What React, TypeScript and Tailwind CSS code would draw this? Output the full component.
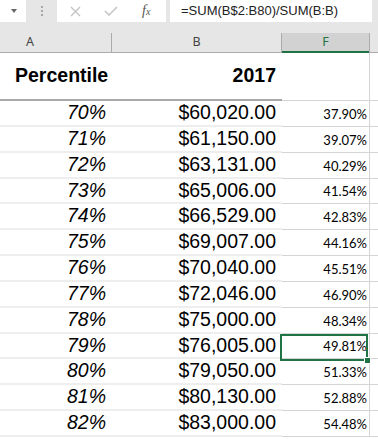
import React from "react";

const rows = [
  { p: "70%", v: "$60,020.00", f: "37.90%", h: "h-[26px]" },
  { p: "71%", v: "$61,150.00", f: "39.07%", h: "h-[26px]" },
  { p: "72%", v: "$63,131.00", f: "40.29%", h: "h-[26px]" },
  { p: "73%", v: "$65,006.00", f: "41.54%", h: "h-[25px]" },
  { p: "74%", v: "$66,529.00", f: "42.83%", h: "h-[26px]" },
  { p: "75%", v: "$69,007.00", f: "44.16%", h: "h-[26px]" },
  { p: "76%", v: "$70,040.00", f: "45.51%", h: "h-[26px]" },
  { p: "77%", v: "$72,046.00", f: "46.90%", h: "h-[26px]" },
  { p: "78%", v: "$75,000.00", f: "48.34%", h: "h-[26px]" },
  { p: "79%", v: "$76,005.00", f: "49.81%", h: "h-[25px]", selected: true },
  { p: "80%", v: "$79,050.00", f: "51.33%", h: "h-[26px]" },
  { p: "81%", v: "$80,130.00", f: "52.88%", h: "h-[26px]" },
  { p: "82%", v: "$83,000.00", f: "54.48%", h: "h-[26px]" },
];

export default function App() {
  return (
    <div className="h-[439px] w-[378px] overflow-hidden bg-white font-['Liberation_Sans',sans-serif] text-black">
      <FormulaBar />
      <div className="h-[11px] bg-[#e6e6e6]" />
      <ColumnHeaders />

      <div className="flex h-[48px]">
        <div className="flex w-[112px] items-center border-b-2 border-[#a9a9a9] pl-[15px] text-[19.5px] font-bold">
          Percentile
        </div>
        <div className="flex w-[170px] items-center justify-end border-b-2 border-[#a9a9a9] pr-[6px] text-[19.5px] font-bold">
          2017
        </div>
        <div className="w-[88px] border-r border-b border-[#d4d4d4]" />
        <div className="flex-1 border-b border-[#d4d4d4]" />
      </div>

      {rows.map((r) => (
        <div className={`flex ${r.h}`} key={r.p}>
          <div className="flex w-[112px] items-center justify-end border-b-2 border-[#eeeeee] pr-[6px] text-[19.5px] italic">
            {r.p}
          </div>
          <div className="flex w-[170px] items-center justify-end border-b-2 border-[#eeeeee] pr-[6px] text-[19.5px]">
            {r.v}
          </div>
          <div className="relative flex w-[88px] items-end justify-end border-r border-b border-[#d4d4d4] pr-[2px] pb-[2px] font-['Lato',sans-serif] text-[13px]">
            {r.f}
            {r.selected && (
              <div className="absolute top-0 right-[1px] bottom-[-3px] left-[-2px] z-10 border-2 border-[#217346]">
                <div className="absolute right-[-4px] bottom-[-4px] h-[5px] w-[5px] bg-[#217346] outline outline-1 outline-white" />
              </div>
            )}
          </div>
          <div className="flex-1 border-b border-[#d4d4d4]" />
        </div>
      ))}
    </div>
  );
}

function FormulaBar() {
  return (
    <div className="flex h-[22px] bg-[#e6e6e6]">
      <div className="flex w-[26px] items-center justify-center bg-white pl-[2px]">
        <svg className="h-[4px] w-[6px] text-[#666]" viewBox="0 0 6 4">
          <path d="M0 0h6L3 4z" fill="currentColor" />
        </svg>
      </div>
      <div className="flex w-[31px] items-center justify-center">
        <svg className="h-[10px] w-[2px] text-[#a6a6a6]" viewBox="0 0 2 10">
          <rect fill="currentColor" height="2" width="2" x="0" y="0" />
          <rect fill="currentColor" height="2" width="2" x="0" y="4" />
          <rect fill="currentColor" height="2" width="2" x="0" y="8" />
        </svg>
      </div>
      <div className="flex w-[109px] items-center bg-white">
        <svg
          className="ml-[13px] h-[11px] w-[11px] text-[#c4c4c4]"
          fill="none"
          stroke="currentColor"
          strokeWidth="1.4"
          viewBox="0 0 11 11"
        >
          <path d="M1 1l9 9M10 1l-9 9" />
        </svg>
        <svg
          className="ml-[23px] h-[10px] w-[14px] text-[#c4c4c4]"
          fill="none"
          stroke="currentColor"
          strokeWidth="1.5"
          viewBox="0 0 14 10"
        >
          <path d="M1 5l4 4 8-8" />
        </svg>
        <span className="ml-[24px] font-['Liberation_Serif',serif] text-[14px] leading-none text-[#555] italic">
          f<span className="text-[10px]">x</span>
        </span>
      </div>
      <div className="w-[4px]" />
      <div className="flex w-[202px] items-center bg-white pl-[11px] text-[13px] text-[#222]">
        =SUM(B$2:B80)/SUM(B:B)
      </div>
    </div>
  );
}

function ColumnHeaders() {
  return (
    <div className="flex h-[20px] bg-[#e6e6e6] font-['Noto_Sans',sans-serif] text-[12.5px] text-[#444]">
      <div className="flex w-[112px] items-center border-r border-b border-[#ababab] pl-[26px]">
        A
      </div>
      <div className="flex w-[170px] items-center justify-center border-r border-b border-[#ababab]">
        B
      </div>
      <div className="flex w-[87px] items-center justify-center border-b-2 border-[#217346] bg-[#d2d2d2] text-[#217346]">
        F
      </div>
      <div className="flex-1 border-l border-b border-[#ababab]" />
    </div>
  );
}
